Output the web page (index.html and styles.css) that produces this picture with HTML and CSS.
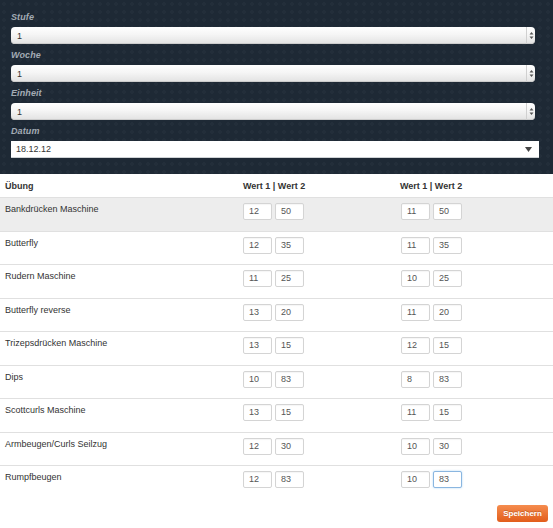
FILE: index.html
```html
<!DOCTYPE html>
<html lang="de">
<head>
<meta charset="utf-8">
<title>Training</title>
<link rel="stylesheet" href="styles.css">
</head>
<body>
<div class="top">
  <div class="field">
    <div class="lbl">Stufe</div>
    <div class="sel"><span class="val">1</span><span class="spin"><svg width="5" height="9" viewBox="0 0 5 9"><path d="M0.5 3.5 L2.5 1 L4.5 3.5 Z M0.5 5.5 L2.5 8 L4.5 5.5 Z" fill="#555"/></svg></span></div>
  </div>
  <div class="field">
    <div class="lbl">Woche</div>
    <div class="sel"><span class="val">1</span><span class="spin"><svg width="5" height="9" viewBox="0 0 5 9"><path d="M0.5 3.5 L2.5 1 L4.5 3.5 Z M0.5 5.5 L2.5 8 L4.5 5.5 Z" fill="#555"/></svg></span></div>
  </div>
  <div class="field">
    <div class="lbl">Einheit</div>
    <div class="sel"><span class="val">1</span><span class="spin"><svg width="5" height="9" viewBox="0 0 5 9"><path d="M0.5 3.5 L2.5 1 L4.5 3.5 Z M0.5 5.5 L2.5 8 L4.5 5.5 Z" fill="#555"/></svg></span></div>
  </div>
  <div class="field">
    <div class="lbl">Datum</div>
    <div class="date"><span class="val">18.12.12</span><svg width="7" height="5" viewBox="0 0 7 5"><path d="M0 0 L7 0 L3.5 5 Z" fill="#444"/></svg></div>
  </div>
</div>

<div class="tbl">
  <div class="row head">
    <div class="c1">Übung</div>
    <div class="c2">Wert 1 | Wert 2</div>
    <div class="c3">Wert 1 | Wert 2</div>
  </div>
  <div class="row alt">
    <div class="c1">Bankdrücken Maschine</div>
    <div class="c2"><span class="in">12</span><span class="in">50</span></div>
    <div class="c3"><span class="in">11</span><span class="in">50</span></div>
  </div>
  <div class="row">
    <div class="c1">Butterfly</div>
    <div class="c2"><span class="in">12</span><span class="in">35</span></div>
    <div class="c3"><span class="in">11</span><span class="in">35</span></div>
  </div>
  <div class="row">
    <div class="c1">Rudern Maschine</div>
    <div class="c2"><span class="in">11</span><span class="in">25</span></div>
    <div class="c3"><span class="in">10</span><span class="in">25</span></div>
  </div>
  <div class="row">
    <div class="c1">Butterfly reverse</div>
    <div class="c2"><span class="in">13</span><span class="in">20</span></div>
    <div class="c3"><span class="in">11</span><span class="in">20</span></div>
  </div>
  <div class="row">
    <div class="c1">Trizepsdrücken Maschine</div>
    <div class="c2"><span class="in">13</span><span class="in">15</span></div>
    <div class="c3"><span class="in">12</span><span class="in">15</span></div>
  </div>
  <div class="row">
    <div class="c1">Dips</div>
    <div class="c2"><span class="in">10</span><span class="in">83</span></div>
    <div class="c3"><span class="in">8</span><span class="in">83</span></div>
  </div>
  <div class="row">
    <div class="c1">Scottcurls Maschine</div>
    <div class="c2"><span class="in">13</span><span class="in">15</span></div>
    <div class="c3"><span class="in">11</span><span class="in">15</span></div>
  </div>
  <div class="row">
    <div class="c1">Armbeugen/Curls Seilzug</div>
    <div class="c2"><span class="in">12</span><span class="in">30</span></div>
    <div class="c3"><span class="in">10</span><span class="in">30</span></div>
  </div>
  <div class="row">
    <div class="c1">Rumpfbeugen</div>
    <div class="c2"><span class="in">12</span><span class="in">83</span></div>
    <div class="c3"><span class="in">10</span><span class="in focus">83</span></div>
  </div>
</div>

<div class="actions">
  <span class="btn">Speichern</span>
</div>
</body>
</html>
```

FILE: styles.css
```css
html, body {
  margin: 0;
  padding: 0;
  background: #fff;
}
body {
  font-family: "Liberation Sans", Arial, Helvetica, sans-serif;
  font-size: 9px;
  color: #333;
  width: 553px;
  height: 528px;
  overflow: hidden;
}

.top {
  background-color: #1e2935;
  background-image: radial-gradient(circle, rgba(255,255,255,0.022) 1.6px, transparent 2.1px);
  background-size: 8px 8px;
  padding: 11px 0 16px 11px;
  display: flex;
  flex-direction: column;
  gap: 5px;
}
.field {
  display: flex;
  flex-direction: column;
}
.lbl {
  font-weight: bold;
  font-style: italic;
  color: #a3abb4;
  line-height: 13px;
  height: 13px;
  margin-bottom: 3px;
  letter-spacing: 0.1px;
}
.sel {
  width: 524px;
  height: 17px;
  box-sizing: border-box;
  border-radius: 4px;
  background: linear-gradient(#ffffff 0%, #f5f5f5 45%, #e2e2e2 100%);
  box-shadow: inset 0 -1px 0 #cccccc;
  display: flex;
  align-items: center;
  justify-content: space-between;
  color: #333;
}
.sel .val {
  padding-left: 6px;
}
.spin {
  width: 8px;
  height: 17px;
  border-left: 1px solid #d0d0d0;
  display: flex;
  align-items: center;
  justify-content: center;
}
.date {
  width: 528px;
  height: 17px;
  box-sizing: border-box;
  background: #fff;
  border-bottom: 1px solid #cfd3d6;
  display: flex;
  align-items: center;
  justify-content: space-between;
  padding: 0 7px 0 5px;
  color: #333;
}

.tbl {
  display: flex;
  flex-direction: column;
}
.row {
  display: grid;
  grid-template-columns: 243px 157px 1fr;
  height: 33.5px;
  border-top: 1px solid #e0e0e0;
  box-sizing: border-box;
}
.row.head {
  height: 23px;
  border-top: none;
  font-weight: bold;
  align-items: center;
}
.row.head .c1, .row.head .c2, .row.head .c3 {
  padding-top: 0;
}
.row.alt {
  background: #ededed;
}
.c1 {
  padding: 4px 0 0 5px;
  line-height: 14px;
}
.c2, .c3 {
  display: flex;
  gap: 3px;
  padding-top: 5px;
  align-items: flex-start;
}
.row.head .c3 {
  padding-left: 0;
}
.c3 {
  padding-left: 1px;
}
.in {
  display: block;
  width: 29px;
  height: 17px;
  box-sizing: border-box;
  border: 1px solid #d4d4d4;
  border-radius: 2px;
  background: #fff;
  color: #555;
  line-height: 15px;
  padding-left: 5px;
  box-shadow: inset 0 1px 1px rgba(0,0,0,0.04);
}
.in.focus {
  border-color: #8ab6e0;
  box-shadow: 0 0 2px rgba(82,168,236,0.5);
}

.actions {
  display: flex;
  justify-content: flex-end;
  padding: 6px 5px 0 0;
}
.btn {
  display: block;
  width: 51px;
  height: 17px;
  line-height: 17px;
  text-align: center;
  font-size: 8px;
  font-weight: bold;
  color: #fff;
  border-radius: 3px;
  background: linear-gradient(#f58c4e, #e25d1b);
  text-shadow: 0 -1px 0 rgba(0,0,0,0.2);
}
```
